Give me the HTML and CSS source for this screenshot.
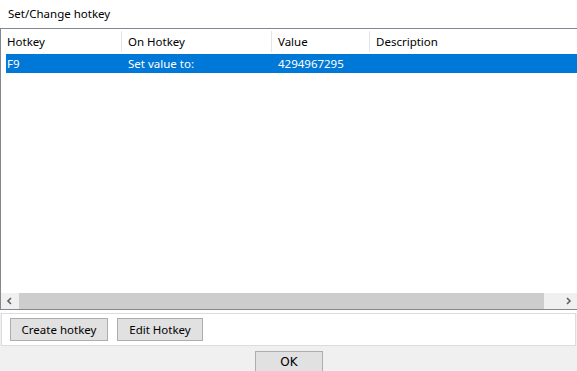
FILE: index.html
```html
<!DOCTYPE html>
<html lang="en">
<head>
    <meta charset="UTF-8">
    <title>Set/Change hotkey</title>
    <link rel="stylesheet" href="styles.css">
</head>
<body>
    <div class="title">Set/Change hotkey</div>

    <div class="listview">
        <div class="lv-header">
            <div class="col col-hotkey">Hotkey</div>
            <div class="col col-action">On Hotkey</div>
            <div class="col col-value">Value</div>
            <div class="col col-desc">Description</div>
        </div>
        <div class="lv-body">
            <div class="lv-row selected">
                <div class="col col-hotkey">F9</div>
                <div class="col col-action">Set value to:</div>
                <div class="col col-value">4294967295</div>
                <div class="col col-desc"></div>
            </div>
        </div>
        <div class="hscroll">
            <div class="sb-arrow">
                <svg width="8" height="8" viewBox="0 0 8 8"><path d="M5 1 L2 4 L5 7" fill="none" stroke="#606060" stroke-width="1.6"/></svg>
            </div>
            <div class="sb-thumb"></div>
            <div class="sb-track"></div>
            <div class="sb-arrow">
                <svg width="8" height="8" viewBox="0 0 8 8"><path d="M3 1 L6 4 L3 7" fill="none" stroke="#606060" stroke-width="1.6"/></svg>
            </div>
        </div>
    </div>

    <div class="gap"></div>
    <div class="toolbar">
        <button class="btn btn-create">Create hotkey</button>
        <button class="btn btn-edit">Edit Hotkey</button>
    </div>

    <div class="footer">
        <button class="btn btn-ok">OK</button>
    </div>
</body>
</html>
```

FILE: styles.css
```css
body {
    margin: 0;
    width: 577px;
    height: 371px;
    overflow: hidden;
    background-color: #f0f0f0;
    font-family: "Noto Sans", "Open Sans", sans-serif;
    font-size: 11.5px;
    color: #000;
}
.title {
    height: 28px;
    line-height: 28px;
    padding-left: 8px;
    background-color: #ffffff;
    box-sizing: border-box;
    padding-bottom: 2px;
}
.listview {
    background-color: #ffffff;
    border-top: 1px solid #828790;
    border-left: 1px solid #828790;
    border-bottom: 1px solid #828790;
    height: 282px;
    box-sizing: border-box;
    display: flex;
    flex-direction: column;
}
.lv-header {
    display: flex;
    height: 25px;
    align-items: center;
}
.lv-header .col {
    height: 21px;
    line-height: 21px;
    border-right: 1px solid #e5e5e5;
}
.lv-header .col-desc {
    border-right: none;
}
.col {
    box-sizing: border-box;
    padding-left: 6px;
    white-space: nowrap;
}
.col-hotkey {
    width: 121px;
}
.col-action {
    width: 150px;
}
.col-value {
    width: 98px;
}
.col-desc {
    flex: 1;
}
.lv-body {
    flex: 1;
    padding-left: 5px;
}
.lv-row {
    display: flex;
    height: 19px;
    line-height: 19px;
}
.lv-row .col-hotkey {
    width: 116px;
    padding-left: 1px;
}
.lv-row.selected {
    background-color: #0078d7;
    color: #ffffff;
}
.hscroll {
    display: flex;
    height: 16px;
    background-color: #f0f0f0;
}
.sb-arrow {
    width: 18px;
    display: flex;
    align-items: center;
    justify-content: center;
}
.sb-thumb {
    width: 525px;
    background-color: #cdcdcd;
}
.sb-track {
    flex: 1;
}
.gap {
    height: 3px;
    background-color: #ffffff;
}
.toolbar {
    margin: 0 1px 0 1px;
    height: 33px;
    box-sizing: border-box;
    border: 1px solid #dcdcdc;
    background-color: #ffffff;
    display: flex;
    align-items: center;
    gap: 9px;
    padding-left: 8px;
}
.btn {
    font-family: "Noto Sans", "Open Sans", sans-serif;
    font-size: 11.5px;
    color: #000;
    background-color: #e1e1e1;
    border: 1px solid #adadad;
    border-radius: 0;
    padding: 0;
    height: 23px;
    margin: 0;
}
.btn-create {
    width: 98px;
}
.btn-edit {
    width: 86px;
}
.footer {
    display: flex;
    justify-content: center;
    padding-top: 5px;
}
.btn-ok {
    width: 68px;
    height: 21px;
    font-family: "DejaVu Sans", sans-serif;
    font-size: 12px;
    margin-left: 1px;
}
```
